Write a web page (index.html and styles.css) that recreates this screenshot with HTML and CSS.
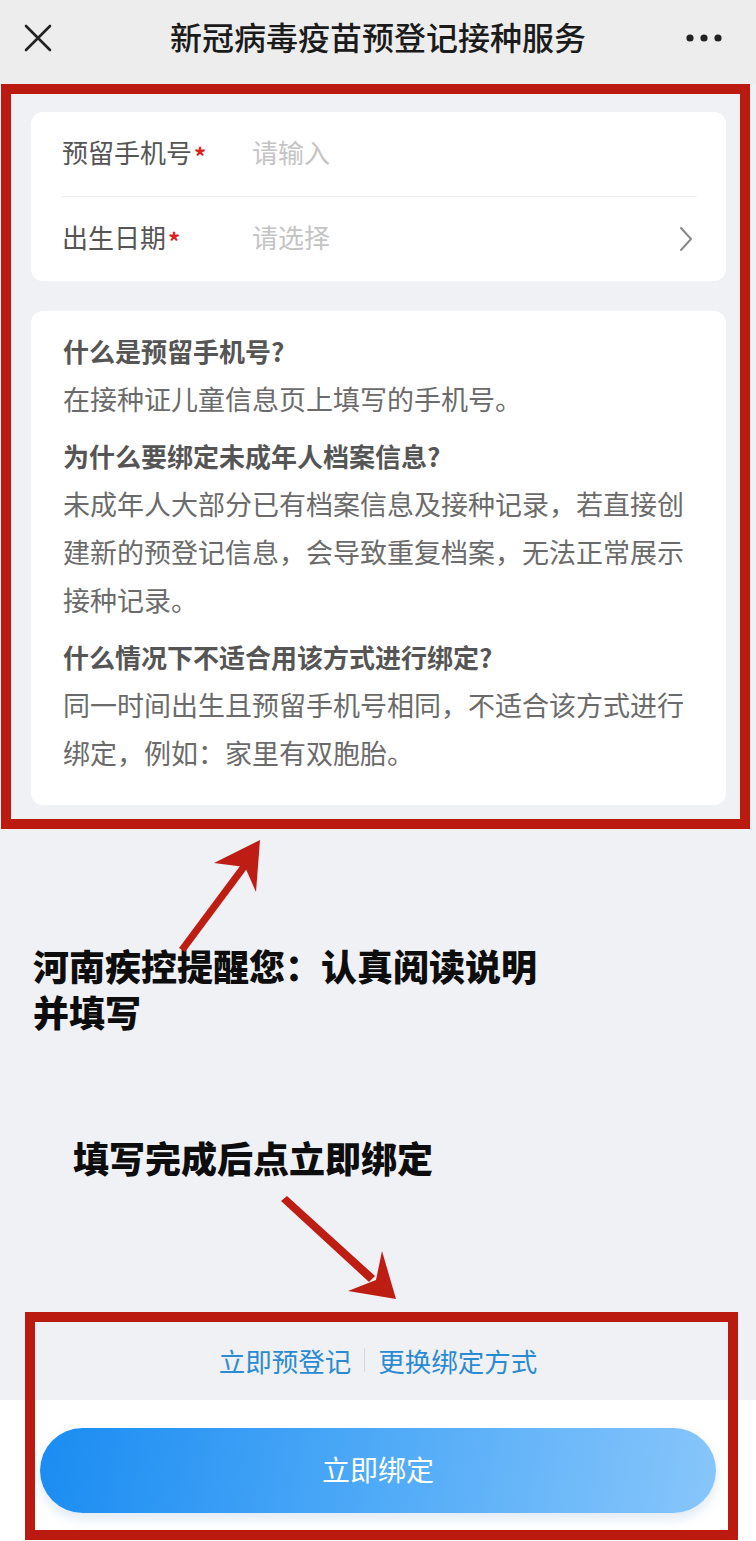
FILE: index.html
```html
<!DOCTYPE html>
<html lang="zh-CN">
<head>
<meta charset="utf-8">
<title>新冠病毒疫苗预登记接种服务</title>
<link rel="stylesheet" href="styles.css">
</head>
<body>
<div class="page">
  <header class="nav">
    <span class="nav-close">
      <svg width="28" height="28" viewBox="0 0 28 28"><path d="M2 2 L26 26 M26 2 L2 26" stroke="#222" stroke-width="2.6" fill="none" stroke-linecap="round"/></svg>
    </span>
    <h1 class="nav-title">新冠病毒疫苗预登记接种服务</h1>
    <span class="nav-more">
      <svg width="36" height="10" viewBox="0 0 36 10"><circle cx="4" cy="5" r="3.6" fill="#222"/><circle cx="18" cy="5" r="3.6" fill="#222"/><circle cx="32" cy="5" r="3.6" fill="#222"/></svg>
    </span>
  </header>

  <main class="main">
    <section class="frame">
      <div class="card form">
        <div class="row">
          <span class="label">预留手机号<em class="req">*</em></span>
          <span class="placeholder">请输入</span>
        </div>
        <div class="row">
          <span class="label">出生日期<em class="req">*</em></span>
          <span class="placeholder">请选择</span>
          <svg class="chevron" width="16" height="26" viewBox="0 0 16 26"><path d="M3 2 L13 13 L3 24" stroke="#8a8a8a" stroke-width="2" fill="none" stroke-linecap="round" stroke-linejoin="round"/></svg>
        </div>
      </div>

      <div class="card faq">
        <div class="faq-item">
          <h3 class="faq-q">什么是预留手机号?</h3>
          <p class="faq-a">在接种证儿童信息页上填写的手机号。</p>
        </div>
        <div class="faq-item">
          <h3 class="faq-q">为什么要绑定未成年人档案信息?</h3>
          <p class="faq-a">未成年人大部分已有档案信息及接种记录，若直接创建新的预登记信息，会导致重复档案，无法正常展示接种记录。</p>
        </div>
        <div class="faq-item">
          <h3 class="faq-q">什么情况下不适合用该方式进行绑定?</h3>
          <p class="faq-a">同一时间出生且预留手机号相同，不适合该方式进行绑定，例如：家里有双胞胎。</p>
        </div>
      </div>
    </section>

    <p class="note note-first">河南疾控提醒您：认真阅读说明<br>并填写</p>
    <p class="note note-second">填写完成后点立即绑定</p>

    <div class="bottom">
      <div class="links">
        <span class="link">立即预登记</span>
        <span class="sep"></span>
        <span class="link">更换绑定方式</span>
      </div>
      <div class="footer">
        <div class="btn">立即绑定</div>
      </div>
      <div class="frame-overlay"></div>
    </div>
  </main>

  <svg class="arrows" width="756" height="1541" viewBox="0 0 756 1541">
    <g fill="#bd1d12" stroke="none">
      <path d="M179 948 L185 952 L249 866 L243 862 Z"/>
      <path d="M260 840 L214 863 L245 867 L256 892 Z"/>
      <path d="M281 1201 L287 1196 L375 1276 L369 1282 Z"/>
      <path d="M396 1299 L382 1251 L376 1280 L348 1291 Z"/>
    </g>
  </svg>
</div>
</body>
</html>
```

FILE: styles.css
```css
* { box-sizing: border-box; }

html, body {
  margin: 0;
  padding: 0;
}

body {
  font-family: "Noto Sans CJK SC", "Noto Sans", sans-serif;
  background: #ffffff;
  color: #333;
}

.page {
  position: relative;
  width: 756px;
  height: 1541px;
  overflow: hidden;
  background: #ffffff;
}

/* ---------- nav bar ---------- */
.nav {
  height: 84px;
  background: #ededed;
  display: grid;
  grid-template-columns: 100px 1fr 100px;
  align-items: center;
}

.nav-close {
  display: flex;
  align-items: center;
  padding-left: 24px;
  padding-bottom: 8px;
}

.nav-title {
  margin: 0;
  text-align: center;
  font-size: 32px;
  font-weight: 500;
  color: #1b1b1b;
  padding-bottom: 12px;
}

.nav-more {
  display: flex;
  justify-content: flex-end;
  padding-right: 34px;
  padding-bottom: 8px;
}

/* ---------- main ---------- */
.main {
  background: #f0f1f5;
  height: 1316px;
  display: flex;
  flex-direction: column;
}

.frame {
  margin: 0 6px 0 1px;
  border: 10px solid #bb1a10;
  padding: 18px 14px 14px 20px;
  display: flex;
  flex-direction: column;
  gap: 30px;
}

.card {
  background: #ffffff;
  border-radius: 12px;
}

/* form card */
.form {
  padding: 0 29px 0 31px;
}

.row {
  display: flex;
  align-items: center;
  height: 84px;
  font-size: 26px;
  padding-bottom: 6px;
}

.row + .row {
  border-top: 1px solid #ececec;
  height: 85px;
}

.label {
  width: 190px;
  color: #555;
  display: flex;
  align-items: center;
}

.req {
  font-style: normal;
  color: #d9241b;
  font-size: 24px;
  font-weight: 700;
  margin-left: 2px;
  position: relative;
  top: 4px;
}

.placeholder {
  flex: 1;
  color: #c4c4c4;
}

.chevron {
  margin-right: 3px;
  margin-top: 6px;
}

/* faq card */
.faq {
  padding: 16px 32px 28px 32px;
}

.faq-item + .faq-item {
  margin-top: 9px;
}

.faq-q {
  margin: 0;
  font-size: 26px;
  font-weight: 700;
  line-height: 48px;
  color: #555;
}

.faq-a {
  margin: 0;
  font-size: 27px;
  line-height: 48px;
  color: #6b6b6b;
}

/* notes */
.note {
  margin: 0;
  font-size: 36px;
  font-weight: 900;
  line-height: 46px;
  color: #0d0d0d;
}

.note-first {
  margin-top: 113px;
  padding-left: 33px;
}

.note-second {
  margin-top: 100px;
  padding-left: 73px;
}

/* bottom area */
.bottom {
  position: relative;
  margin-top: auto;
}

.links {
  height: 76px;
  display: flex;
  align-items: center;
  justify-content: center;
  gap: 13px;
  font-size: 26.5px;
  color: #2a8bd3;
  padding-bottom: 4px;
}

.sep {
  width: 1px;
  height: 24px;
  background: #d6d6d6;
}

.footer {
  position: absolute;
  left: 0;
  right: 0;
  top: 76px;
  height: 141px;
  background: #ffffff;
  padding: 28px 40px 0 40px;
}

.btn {
  height: 85px;
  border-radius: 43px;
  background: linear-gradient(100deg, #1a8cf2 0%, #4faaf7 50%, #88c6fb 100%);
  color: #ffffff;
  font-size: 28px;
  display: flex;
  align-items: center;
  justify-content: center;
  padding-bottom: 4px;
  box-shadow: 0 6px 12px rgba(40, 110, 180, 0.15);
}

.frame-overlay {
  position: absolute;
  left: 25px;
  top: -12px;
  width: 713px;
  height: 228px;
  border: 10px solid #bb1a10;
  pointer-events: none;
  z-index: 2;
}

/* annotation arrows over content */
.arrows {
  position: absolute;
  left: 0;
  top: 0;
  pointer-events: none;
  z-index: 3;
}
```
